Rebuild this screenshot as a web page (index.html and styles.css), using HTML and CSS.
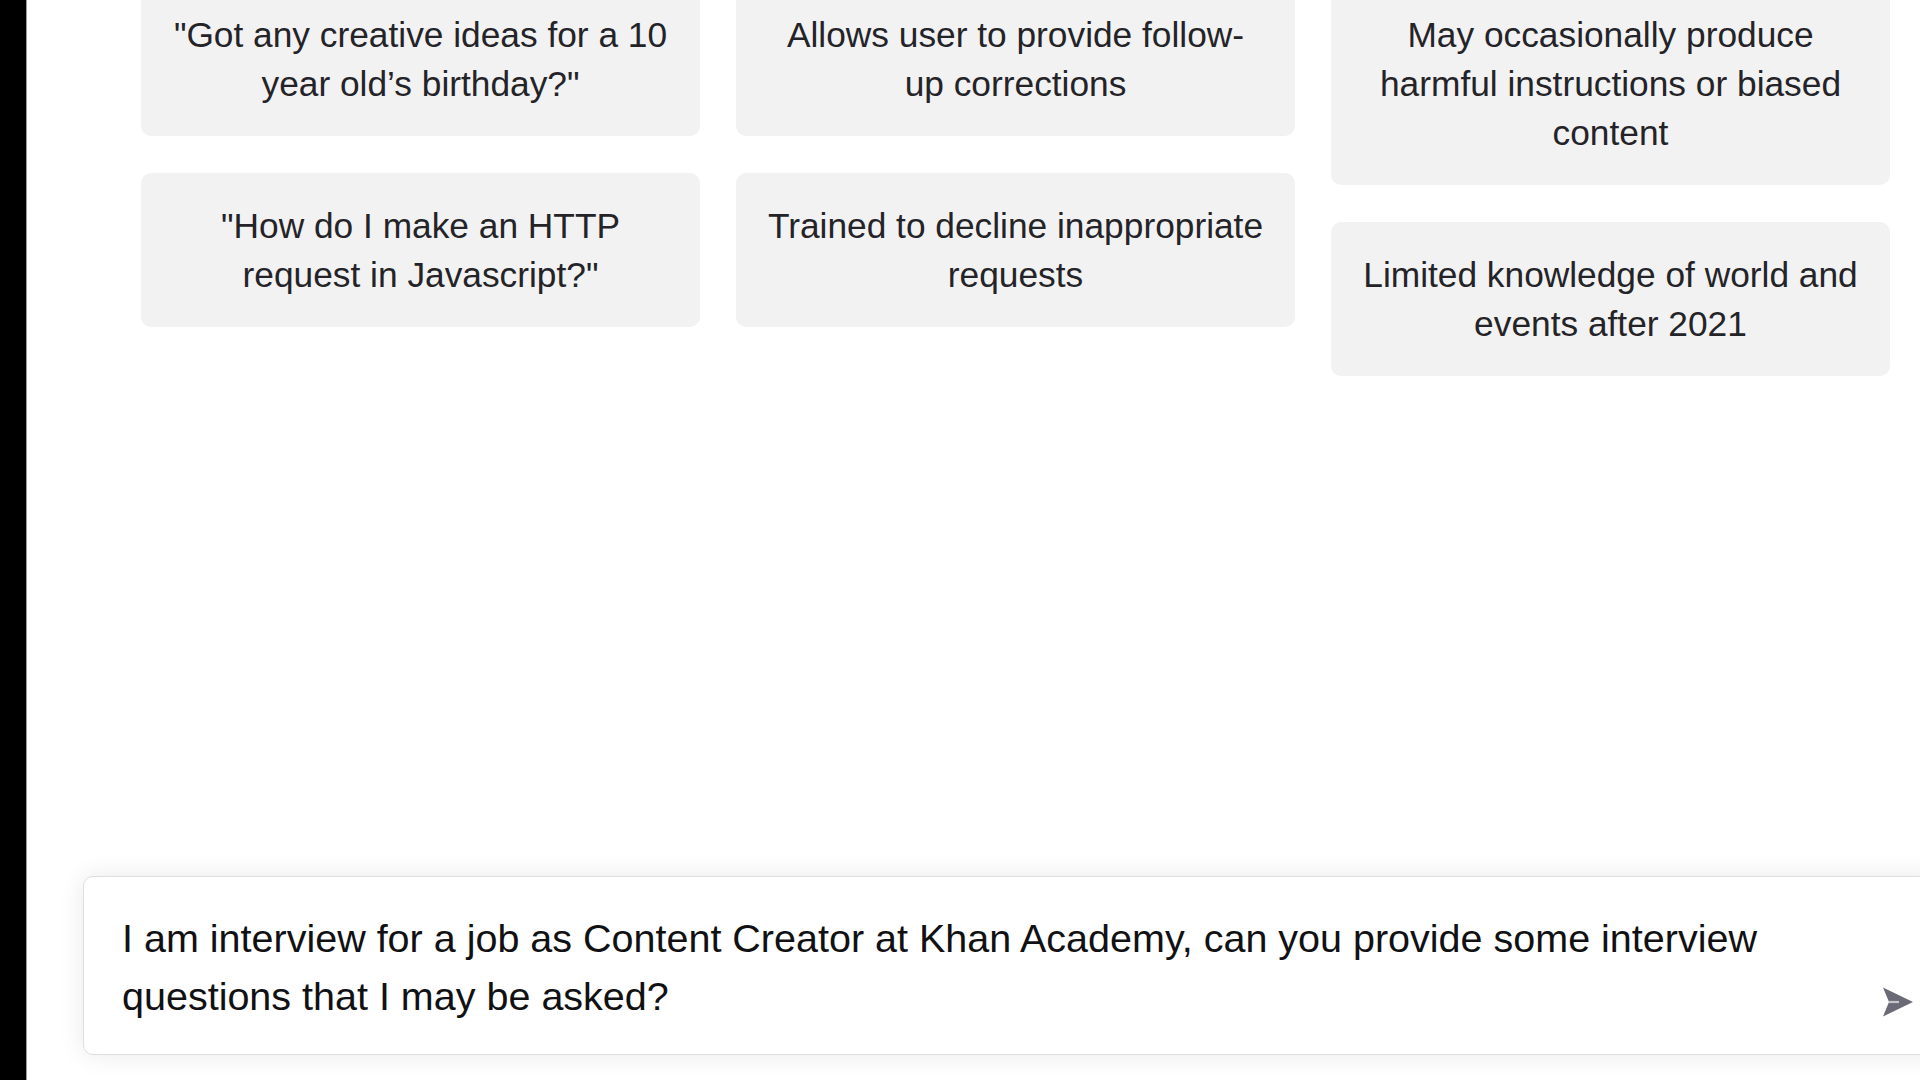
FILE: index.html
```html
<!DOCTYPE html>
<html lang="en">
<head>
<meta charset="utf-8">
<title>ChatGPT</title>
<link rel="stylesheet" href="styles.css">
</head>
<body>
<div class="app">
  <aside class="sidebar"></aside>
  <main class="main">
    <section class="cards">
      <div class="col">
        <div class="card">"Got any creative ideas for a 10<br>year old’s birthday?"</div>
        <div class="card">"How do I make an HTTP<br>request in Javascript?"</div>
      </div>
      <div class="col">
        <div class="card">Allows user to provide follow-<br>up corrections</div>
        <div class="card">Trained to decline inappropriate<br>requests</div>
      </div>
      <div class="col">
        <div class="card">May occasionally produce<br>harmful instructions or biased<br>content</div>
        <div class="card">Limited knowledge of world and<br>events after 2021</div>
      </div>
    </section>
    <div class="spacer"></div>
    <div class="composer">
      <div class="input-box">
        <div class="input-text">I am interview for a job as Content Creator at Khan Academy, can you provide some interview<br>questions that I may be asked?</div>
        <button class="send" aria-label="Send">
          <svg viewBox="0 0 32 32" width="32" height="32">
            <path d="M1 1.5 L31 16 L1 30.5 L7 16 Z" fill="#6b6b78"/>
            <path d="M7 16 H17" stroke="#ffffff" stroke-width="2.2" opacity="0.6"/>
          </svg>
        </button>
      </div>
    </div>
  </main>
</div>
</body>
</html>
```
FILE: styles.css
```css
html, body {
  margin: 0;
  padding: 0;
  height: 100%;
  overflow: hidden;
  background: #ffffff;
}

.app {
  display: flex;
  height: 100vh;
  font-family: "Liberation Sans", Arial, Helvetica, sans-serif;
}

.sidebar {
  width: 26px;
  flex: 0 0 26px;
  background: #000000;
  border-right: 1px solid #9c9c9c;
}

.main {
  flex: 1;
  display: flex;
  flex-direction: column;
  overflow: hidden;
  min-width: 0;
}

.cards {
  display: grid;
  grid-template-columns: 559px 559px 559px;
  column-gap: 36px;
  align-items: start;
  margin-top: -18px;
  padding-left: 114px;
}

.col {
  display: flex;
  flex-direction: column;
  gap: 37px;
}

.card {
  background: #f2f2f3;
  border-radius: 10px;
  padding: 28px 12px;
  text-align: center;
  font-size: 35.3px;
  line-height: 49px;
  color: #242428;
  white-space: nowrap;
}

.spacer {
  flex: 1;
}

.composer {
  padding-left: 56px;
  margin-right: -24px;
  margin-bottom: 25px;
}

.input-box {
  position: relative;
  background: #ffffff;
  border: 1px solid #dedee2;
  border-radius: 10px;
  box-shadow: 0 0 26px rgba(0, 0, 0, 0.09);
  padding: 32px 120px 29px 38px;
}

.input-text {
  font-size: 39.5px;
  line-height: 58px;
  color: #111113;
  white-space: nowrap;
}

.send {
  position: absolute;
  right: 29px;
  bottom: 36px;
  width: 32px;
  height: 32px;
  padding: 0;
  border: 0;
  background: transparent;
  display: flex;
}
```
